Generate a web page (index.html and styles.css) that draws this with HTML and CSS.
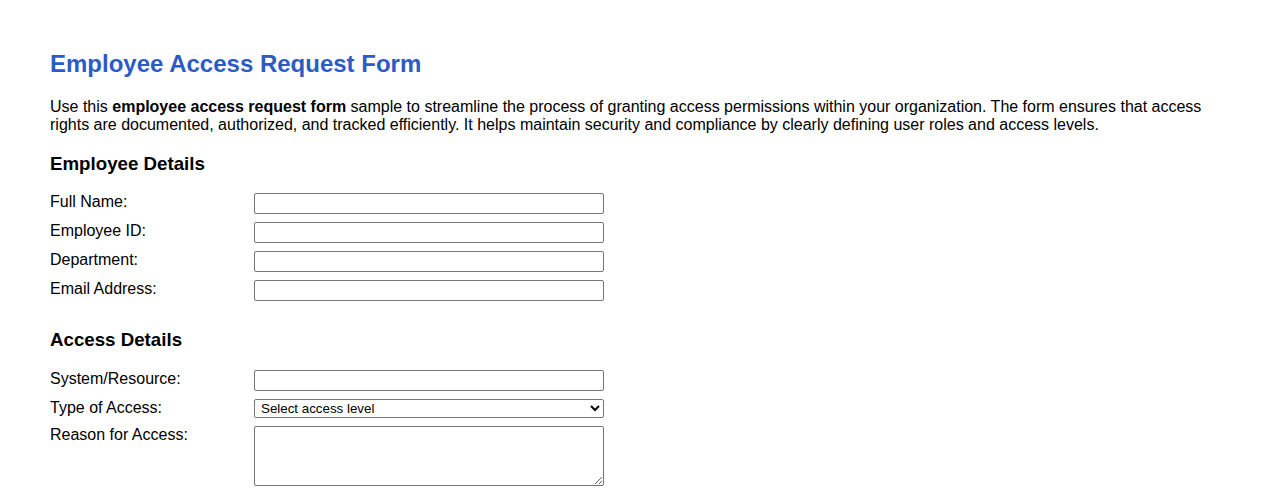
FILE: index.html
```html
<!DOCTYPE html>
<html lang="en">
<head>
<meta charset="utf-8">
<title>Employee Access Request Form</title>
<link rel="stylesheet" href="styles.css">
</head>
<body>
<main class="page">
  <h1 class="title">Employee Access Request Form</h1>
  <p class="intro">Use this <strong>employee access request form</strong> sample to streamline the process of granting access permissions within your organization. The form ensures that access rights are documented, authorized, and tracked efficiently. It helps maintain security and compliance by clearly defining user roles and access levels.</p>

  <form class="form">
    <section class="section">
      <h2 class="section-title">Employee Details</h2>
      <div class="fields">
        <label class="label" for="full-name">Full Name:</label>
        <input class="control" type="text" id="full-name">
        <label class="label" for="employee-id">Employee ID:</label>
        <input class="control" type="text" id="employee-id">
        <label class="label" for="department">Department:</label>
        <input class="control" type="text" id="department">
        <label class="label" for="email">Email Address:</label>
        <input class="control" type="email" id="email">
      </div>
    </section>

    <section class="section section-access">
      <h2 class="section-title">Access Details</h2>
      <div class="fields">
        <label class="label" for="system">System/Resource:</label>
        <input class="control" type="text" id="system">
        <label class="label" for="access-type">Type of Access:</label>
        <select class="control select" id="access-type">
          <option>Select access level</option>
          <option>Read Only</option>
          <option>Read/Write</option>
          <option>Administrator</option>
        </select>
        <label class="label" for="reason">Reason for Access:</label>
        <textarea class="control textarea" id="reason"></textarea>
      </div>
    </section>
  </form>
</main>
</body>
</html>
```

FILE: styles.css
```css
* {
  box-sizing: border-box;
}

html, body {
  margin: 0;
  padding: 0;
  background: #ffffff;
}

body {
  font-family: "Liberation Sans", Arial, sans-serif;
  color: #000000;
}

.page {
  padding: 50px 50px 0 50px;
}

.title {
  margin: 0;
  font-size: 24px;
  line-height: 28px;
  font-weight: bold;
  color: #2d5bc6;
}

.intro {
  margin: 20px 0 0 0;
  font-size: 16px;
  line-height: 18px;
}

.form {
  margin: 0;
}

.section {
  margin-top: 19px;
}

.section-access {
  margin-top: 28px;
}

.section-title {
  margin: 0;
  font-size: 18.72px;
  line-height: 21px;
  font-weight: bold;
}

.fields {
  display: grid;
  grid-template-columns: 204px 350px;
  row-gap: 8px;
  align-items: start;
  margin-top: 19px;
}

.section-access .fields {
  margin-top: 20px;
}

.label {
  font-size: 16px;
  line-height: 18px;
}

.control {
  width: 350px;
  height: 21px;
  margin: 0;
  padding: 1px 2px;
  border: 1px solid #767676;
  border-radius: 2px;
  font-family: "Liberation Sans", Arial, sans-serif;
  font-size: 13.33px;
  background: #ffffff;
}

.select {
  height: 19px;
  padding: 0 0 0 2px;
  color: #000000;
}

.textarea {
  height: 60px;
  resize: both;
}
```
